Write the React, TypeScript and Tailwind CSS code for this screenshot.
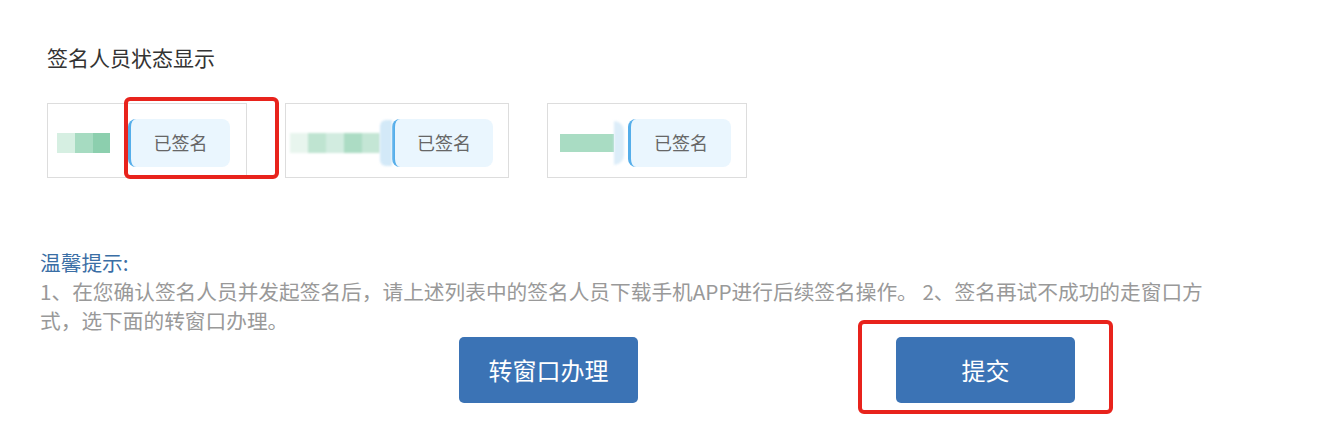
import React from "react";

const font = { fontFamily: '"Noto Sans CJK SC", "Noto Sans", sans-serif' };

function Badge({ w }: { w: string }) {
  return (
    <div
      className={`${w} h-[48px] flex items-center justify-center rounded-[8px] border-l-[3px] border-[#55aeea] bg-[#eaf6fe] text-[18px] text-[#666666]`}
    >
      已签名
    </div>
  );
}

export default function App() {
  return (
    <div className="w-[1329px] h-[434px] bg-white overflow-hidden" style={font}>
      <div className="pt-[43px] pl-[47px] text-[21px] leading-[28px] text-[#333333]">签名人员状态显示</div>

      <div className="mt-[32px] pl-[47px] flex gap-[38px]">
        {/* card 1 */}
        <div className="relative w-[200px] h-[75px] border border-[#dddddd] flex items-center pl-[9px] pt-[4px]">
          <div className="w-[53px] h-[20px] flex blur-[0.6px]">
            <div className="w-[18px] h-full bg-[#d6efe2]" />
            <div className="w-[18px] h-full bg-[#a6dbc1]" />
            <div className="w-[17px] h-full bg-[#8ccfae]" />
          </div>
          <div className="ml-[18px]">
            <Badge w="w-[102px]" />
          </div>
          <div className="absolute left-[76px] top-[-7px] w-[155px] h-[82px] border-[4px] border-[#e8231c] rounded-[6px]" />
        </div>

        {/* card 2 */}
        <div className="w-[224px] h-[75px] border border-[#dddddd] flex items-center pl-[4px] pt-[4px]">
          <div className="w-[90px] h-[20px] flex blur-[0.8px]">
            <div className="w-[18px] h-full bg-[#e8f5ee]" />
            <div className="w-[18px] h-full bg-[#bfe4d1]" />
            <div className="w-[18px] h-full bg-[#d2ece0]" />
            <div className="w-[18px] h-full bg-[#acdcc4]" />
            <div className="w-[18px] h-full bg-[#c4e6d5]" />
          </div>
          <div className="w-[12px] h-[46px] bg-[#d3e9f8] rounded-l-[6px] blur-[1px]" />
          <Badge w="w-[101px]" />
        </div>

        {/* card 3 */}
        <div className="w-[200px] h-[75px] border border-[#dddddd] flex items-center pl-[12px] pt-[4px]">
          <div className="w-[54px] h-[18px] bg-[#a9dcc3] blur-[0.6px]" />
          <div className="w-[10px] h-[44px] bg-[#dcedf9] rounded-r-full blur-[1px]" />
          <div className="ml-[4px]">
            <Badge w="w-[103px]" />
          </div>
        </div>
      </div>

      <div className="mt-[69px] pl-[40px] w-[1215px]">
        <div className="text-[20.7px] leading-[30px] text-[#3a6ea5]">温馨提示:</div>
        <div className="text-[20.7px] leading-[29px] text-[#999999]">
          1、在您确认签名人员并发起签名后，请上述列表中的签名人员下载手机APP进行后续签名操作。 2、签名再试不成功的走窗口方式，选下面的转窗口办理。
        </div>
      </div>

      <div className="mt-[2px] pl-[459px] flex gap-[258px]">
        <button className="w-[179px] h-[66px] rounded-[5px] bg-[#3b73b5] text-white text-[24px]">转窗口办理</button>
        <div className="relative">
          <button className="w-[179px] h-[66px] rounded-[5px] bg-[#3b73b5] text-white text-[24px]">提交</button>
          <div className="absolute left-[-38px] top-[-17px] w-[255px] h-[94px] border-[4px] border-[#e8231c] rounded-[6px]" />
        </div>
      </div>
    </div>
  );
}
